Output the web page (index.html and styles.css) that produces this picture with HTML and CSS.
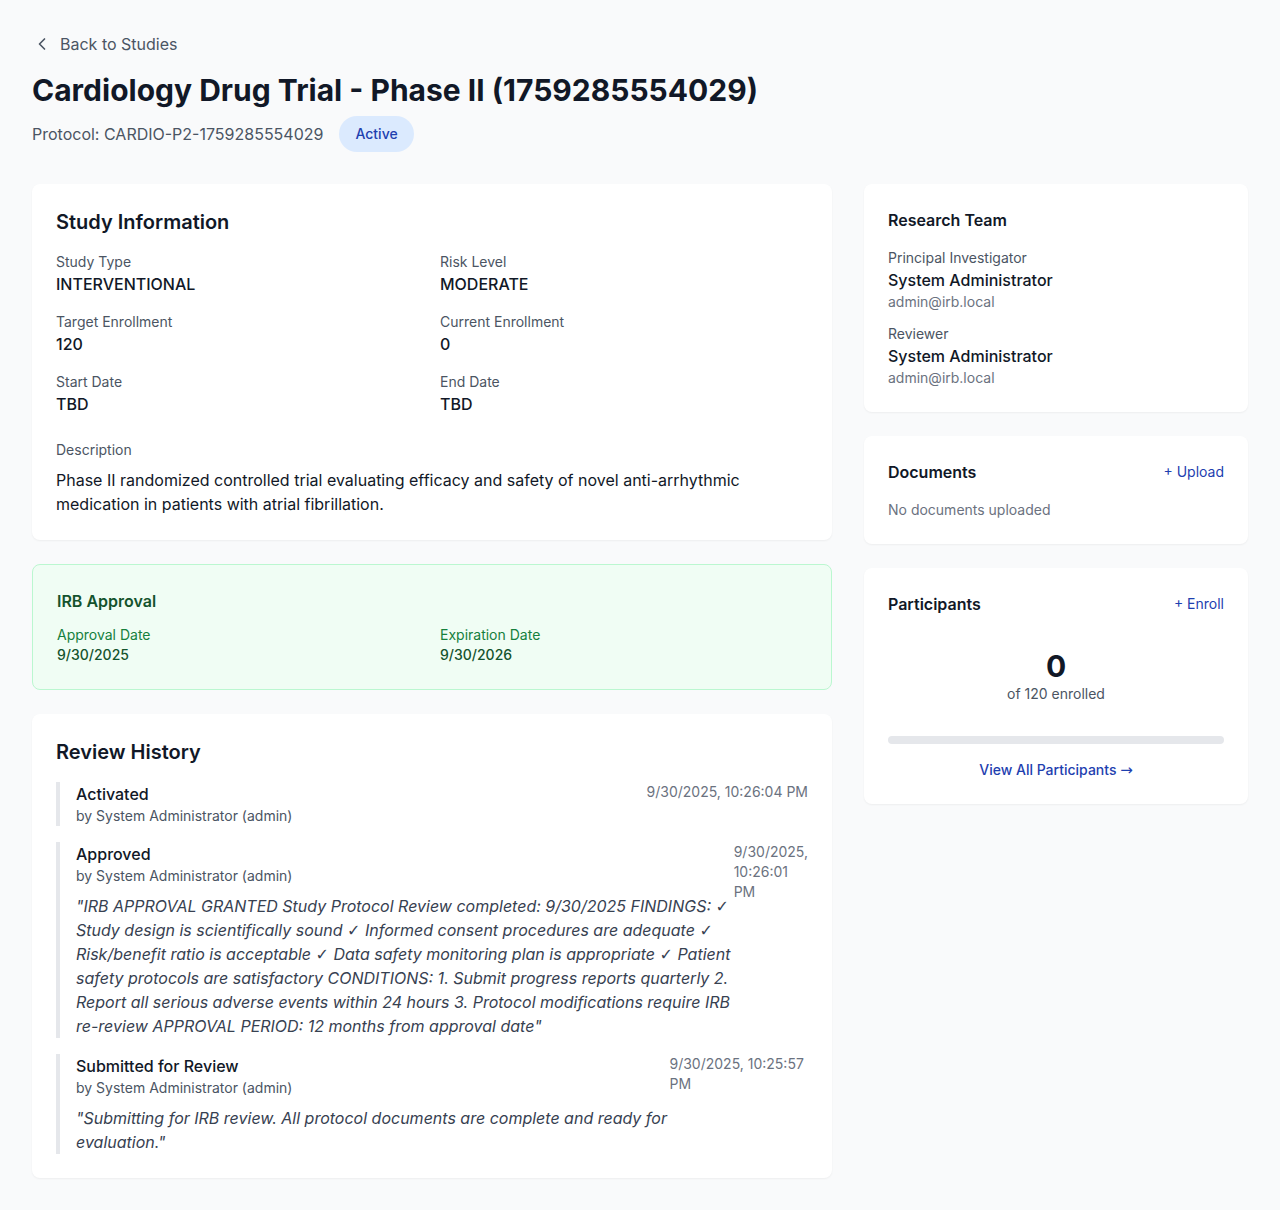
FILE: index.html
```html
<!DOCTYPE html>
<html lang="en">
<head>
<meta charset="utf-8">
<title>Cardiology Drug Trial - Phase II</title>
<link rel="stylesheet" href="styles.css">
</head>
<body>
<div class="page">
  <a class="back" href="#">
    <svg class="back-icon" viewBox="0 0 24 24" width="20" height="20" fill="none" stroke="currentColor" stroke-width="2" stroke-linecap="round" stroke-linejoin="round"><path d="M15 18l-6-6 6-6"/></svg>
    <span>Back to Studies</span>
  </a>
  <h1 class="title">Cardiology Drug Trial - Phase II (1759285554029)</h1>
  <div class="subtitle">
    <span class="protocol">Protocol: CARDIO-P2-1759285554029</span>
    <span class="badge">Active</span>
  </div>

  <div class="layout">
    <div class="main">
      <section class="card">
        <h2 class="card-title">Study Information</h2>
        <div class="info-grid">
          <div><div class="label">Study Type</div><div class="value">INTERVENTIONAL</div></div>
          <div><div class="label">Risk Level</div><div class="value">MODERATE</div></div>
          <div><div class="label">Target Enrollment</div><div class="value">120</div></div>
          <div><div class="label">Current Enrollment</div><div class="value">0</div></div>
          <div><div class="label">Start Date</div><div class="value">TBD</div></div>
          <div><div class="label">End Date</div><div class="value">TBD</div></div>
        </div>
        <div class="description">
          <div class="label">Description</div>
          <p class="desc-text">Phase II randomized controlled trial evaluating efficacy and safety of novel anti-arrhythmic medication in patients with atrial fibrillation.</p>
        </div>
      </section>

      <section class="card approval">
        <h3 class="approval-title">IRB Approval</h3>
        <div class="approval-grid">
          <div><div class="approval-label">Approval Date</div><div class="approval-value">9/30/2025</div></div>
          <div><div class="approval-label">Expiration Date</div><div class="approval-value">9/30/2026</div></div>
        </div>
      </section>

      <section class="card">
        <h2 class="card-title history-title">Review History</h2>
        <div class="history">
          <div class="entry">
            <div class="entry-main">
              <div class="entry-action">Activated</div>
              <div class="entry-by">by System Administrator (admin)</div>
            </div>
            <div class="entry-time">9/30/2025, 10:26:04 PM</div>
          </div>
          <div class="entry">
            <div class="entry-main">
              <div class="entry-action">Approved</div>
              <div class="entry-by">by System Administrator (admin)</div>
              <p class="entry-comment">"IRB APPROVAL GRANTED Study Protocol Review completed: 9/30/2025 FINDINGS: <span class="sym">✓</span> Study design is scientifically sound <span class="sym">✓</span> Informed consent procedures are adequate <span class="sym">✓</span> Risk/benefit ratio is acceptable <span class="sym">✓</span> Data safety monitoring plan is appropriate <span class="sym">✓</span> Patient safety protocols are satisfactory CONDITIONS: 1. Submit progress reports quarterly 2. Report all serious adverse events within 24 hours 3. Protocol modifications require IRB re-review APPROVAL PERIOD: 12 months from approval date"</p>
            </div>
            <div class="entry-time">9/30/2025, 10:26:01 PM</div>
          </div>
          <div class="entry">
            <div class="entry-main">
              <div class="entry-action">Submitted for Review</div>
              <div class="entry-by">by System Administrator (admin)</div>
              <p class="entry-comment">"Submitting for IRB review. All protocol documents are complete and ready for evaluation."</p>
            </div>
            <div class="entry-time">9/30/2025, 10:25:57 PM</div>
          </div>
        </div>
      </section>
    </div>

    <aside class="side">
      <section class="card">
        <h3 class="side-title">Research Team</h3>
        <div class="team">
          <div>
            <div class="label">Principal Investigator</div>
            <div class="person">System Administrator</div>
            <div class="email">admin@irb.local</div>
          </div>
          <div>
            <div class="label">Reviewer</div>
            <div class="person">System Administrator</div>
            <div class="email">admin@irb.local</div>
          </div>
        </div>
      </section>

      <section class="card">
        <div class="side-head">
          <h3 class="side-title flat">Documents</h3>
          <a class="side-link" href="#">+ Upload</a>
        </div>
        <p class="empty">No documents uploaded</p>
      </section>

      <section class="card">
        <div class="side-head">
          <h3 class="side-title flat">Participants</h3>
          <a class="side-link" href="#">+ Enroll</a>
        </div>
        <div class="count-block">
          <div class="count">0</div>
          <div class="count-sub">of 120 enrolled</div>
        </div>
        <div class="progress"><div class="progress-fill" style="width:0%"></div></div>
        <a class="view-all" href="#">View All Participants <span class="arrow">→</span></a>
      </section>
    </aside>
  </div>
</div>
</body>
</html>
```

FILE: styles.css
```css
* { box-sizing: border-box; }
html, body { margin: 0; padding: 0; }
body {
  background: #f9fafb;
  font-family: Inter, "Noto Sans", "Liberation Sans", sans-serif;
  color: #111827;
  -webkit-font-smoothing: antialiased;
}
h1, h2, h3, p { margin: 0; }
a { text-decoration: none; }

.page {
  padding: 32px;
}

.back {
  display: flex;
  width: fit-content;
  align-items: center;
  gap: 8px;
  color: #4b5563;
  font-size: 16px;
  line-height: 24px;
}
.back-icon { color: #4b5563; display: block; }

.title {
  margin-top: 16px;
  font-size: 30px;
  line-height: 36px;
  font-weight: 700;
  color: #111827;
}

.subtitle {
  margin-top: 8px;
  display: flex;
  align-items: center;
  gap: 16px;
}
.protocol {
  color: #4b5563;
  font-size: 16px;
  line-height: 24px;
}
.badge {
  display: inline-block;
  padding: 8px 16px;
  border-radius: 9999px;
  background: #dbeafe;
  color: #1e40af;
  font-size: 14px;
  line-height: 20px;
  font-weight: 500;
}

.layout {
  margin-top: 32px;
  display: grid;
  grid-template-columns: repeat(3, minmax(0, 1fr));
  gap: 32px;
  align-items: start;
}
.main {
  grid-column: span 2;
}
.main, .side {
  display: flex;
  flex-direction: column;
  gap: 24px;
}

.card {
  background: #ffffff;
  border-radius: 8px;
  box-shadow: 0 1px 2px rgba(0, 0, 0, 0.05);
  padding: 24px;
}

.card-title {
  font-size: 20px;
  line-height: 28px;
  font-weight: 600;
  color: #111827;
  margin-bottom: 16px;
}

.info-grid {
  display: grid;
  grid-template-columns: 1fr 1fr;
  column-gap: 16px;
  row-gap: 16px;
}
.label {
  font-size: 14px;
  line-height: 20px;
  color: #4b5563;
}
.value {
  font-size: 16px;
  line-height: 24px;
  font-weight: 500;
  color: #111827;
}
.description { margin-top: 24px; }
.desc-text {
  margin-top: 8px;
  font-size: 16px;
  line-height: 24px;
  color: #111827;
}

.approval {
  background: #f0fdf4;
  border: 1px solid #bbf7d0;
  box-shadow: none;
}
.approval-title {
  font-size: 16px;
  line-height: 24px;
  font-weight: 600;
  color: #14532d;
  margin-bottom: 12px;
}
.approval-grid {
  display: grid;
  grid-template-columns: 1fr 1fr;
  column-gap: 16px;
}
.approval-label {
  font-size: 14px;
  line-height: 20px;
  color: #15803d;
}
.approval-value {
  font-size: 14px;
  line-height: 20px;
  font-weight: 500;
  color: #14532d;
}

.history-title { margin-bottom: 16px; }
.history {
  display: flex;
  flex-direction: column;
  gap: 16px;
}
.entry {
  display: flex;
  justify-content: space-between;
  align-items: flex-start;
  border-left: 4px solid #e5e7eb;
  padding-left: 16px;
}
.entry-action {
  font-size: 16px;
  line-height: 24px;
  font-weight: 500;
  color: #111827;
}
.entry-by {
  font-size: 14px;
  line-height: 20px;
  color: #4b5563;
}
.entry-comment {
  margin-top: 8px;
  font-size: 16px;
  line-height: 24px;
  font-style: italic;
  color: #374151;
}
.entry-time {
  font-size: 14px;
  line-height: 20px;
  color: #6b7280;
}

.sym {
  font-family: "DejaVu Sans", sans-serif;
  font-style: normal;
  font-weight: 400;
  line-height: 1;
}
.arrow {
  font-family: "DejaVu Sans", sans-serif;
  font-weight: 400;
  font-size: 15px;
  line-height: 1;
}

.side-title {
  font-size: 16px;
  line-height: 24px;
  font-weight: 600;
  color: #111827;
  margin-bottom: 16px;
}
.side-title.flat { margin-bottom: 0; }
.team {
  display: flex;
  flex-direction: column;
  gap: 12px;
}
.person {
  font-size: 16px;
  line-height: 24px;
  font-weight: 500;
  color: #111827;
}
.email {
  font-size: 14px;
  line-height: 20px;
  color: #6b7280;
}

.side-head {
  display: flex;
  justify-content: space-between;
  align-items: center;
  margin-bottom: 16px;
}
.side-link {
  font-size: 14px;
  line-height: 20px;
  color: #1e40af;
}
.empty {
  font-size: 14px;
  line-height: 20px;
  color: #6b7280;
}

.count-block {
  text-align: center;
  padding: 16px 0;
}
.count {
  font-size: 30px;
  line-height: 36px;
  font-weight: 700;
  color: #111827;
}
.count-sub {
  font-size: 14px;
  line-height: 20px;
  color: #4b5563;
}
.progress {
  margin-top: 16px;
  height: 8px;
  border-radius: 9999px;
  background: #e5e7eb;
  overflow: hidden;
}
.progress-fill {
  height: 100%;
  background: #1e40af;
}
.view-all {
  display: block;
  margin-top: 16px;
  text-align: center;
  font-size: 14px;
  line-height: 20px;
  font-weight: 500;
  color: #1e40af;
}
```
